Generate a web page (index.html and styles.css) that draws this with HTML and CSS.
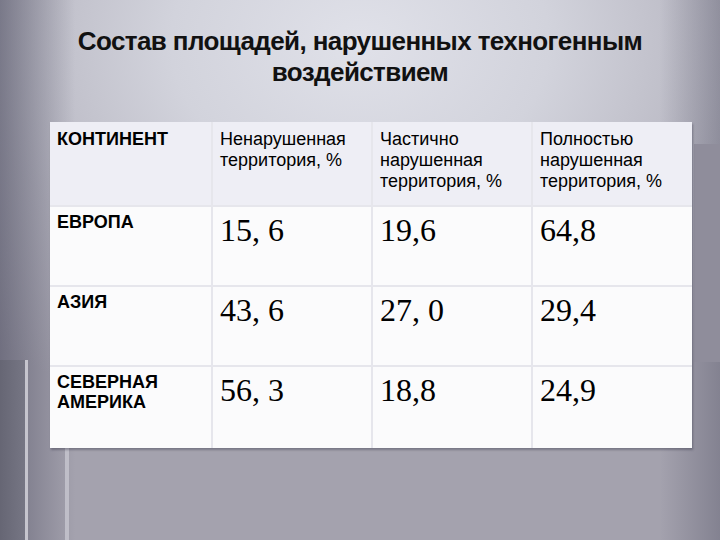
FILE: index.html
```html
<!DOCTYPE html>
<html lang="ru">
<head>
<meta charset="utf-8">
<title>Состав площадей</title>
<link rel="stylesheet" href="styles.css">
</head>
<body>
<div class="slide">
  <h1 class="title">Состав площадей, нарушенных техногенным<br>воздействием</h1>
  <table class="data">
    <colgroup>
      <col class="c1"><col class="c2"><col class="c3"><col class="c4">
    </colgroup>
    <thead>
      <tr class="head">
        <th class="label">КОНТИНЕНТ</th>
        <th>Ненарушенная территория, %</th>
        <th>Частично нарушенная территория, %</th>
        <th>Полностью нарушенная территория, %</th>
      </tr>
    </thead>
    <tbody>
      <tr class="r1">
        <td class="label">ЕВРОПА</td>
        <td class="num">15, 6</td>
        <td class="num">19,6</td>
        <td class="num">64,8</td>
      </tr>
      <tr class="r2">
        <td class="label">АЗИЯ</td>
        <td class="num">43, 6</td>
        <td class="num">27, 0</td>
        <td class="num">29,4</td>
      </tr>
      <tr class="r3">
        <td class="label">СЕВЕРНАЯ АМЕРИКА</td>
        <td class="num">56, 3</td>
        <td class="num">18,8</td>
        <td class="num">24,9</td>
      </tr>
    </tbody>
  </table>
</div>
</body>
</html>
```
FILE: styles.css
```css
html, body {
  margin: 0;
  padding: 0;
}
body {
  width: 720px;
  height: 540px;
  overflow: hidden;
  font-family: "Liberation Sans", Arial, sans-serif;
  background-color: #a5a3af;
  background-repeat: no-repeat;
  background-image:
    linear-gradient(#c6c5ce, #c6c5ce),
    linear-gradient(#bfbec8, #bfbec8),
    linear-gradient(to right, #666674, #767684),
    linear-gradient(#8f8d9b, #8f8d9b),
    linear-gradient(to right, rgba(70, 70, 90, 0.55), rgba(70, 70, 90, 0) 75px),
    linear-gradient(to left, rgba(70, 70, 90, 0.35), rgba(70, 70, 90, 0) 60px),
    radial-gradient(ellipse 75% 75% at 50% 8%, #e0e1e9 0%, #d2d3dc 35%, #b6b5c0 70%, #a4a2ae 100%);
  background-size:
    3px 180px,
    4px 92px,
    25px 180px,
    26px 218px,
    100% 100%,
    100% 100%,
    100% 100%;
  background-position:
    25px 360px,
    65px 448px,
    0 360px,
    694px 144px,
    0 0,
    0 0,
    0 0;
}
.slide {
  width: 720px;
  height: 540px;
}
.title {
  margin: 0;
  padding-top: 26px;
  font-size: 26px;
  letter-spacing: -0.6px;
  line-height: 31px;
  font-weight: bold;
  text-align: center;
  color: #111;
}
.data {
  margin: 34px 0 0 50px;
  width: 642px;
  table-layout: fixed;
  border-collapse: collapse;
  background: #fbfbfc;
  box-shadow: 1px 2px 2px rgba(40, 40, 60, 0.35);
}
.c1 { width: 162px; }
.c2, .c3, .c4 { width: 160px; }
.data th,
.data td {
  border: 2px solid #e6e6ec;
  vertical-align: top;
  text-align: left;
  padding: 5px 6px 0 7px;
  color: #000;
}
.data tr:first-child th { border-top: none; }
.data tr:last-child td { border-bottom: none; }
.data th:first-child, .data td:first-child { border-left: none; }
.data th:last-child, .data td:last-child { border-right: none; }
.head th {
  height: 84px;
  box-sizing: border-box;
  padding-top: 7px;
  background: #eeeef5;
  font-size: 18px;
  line-height: 21px;
  font-weight: normal;
}
.head th.label { font-weight: bold; }
.r1 td, .r2 td { height: 80px; box-sizing: border-box; }
.r3 td { height: 82px; box-sizing: border-box; }
.label {
  font-size: 18px;
  line-height: 20px;
  font-weight: bold;
}
.num {
  font-family: "Liberation Serif", "Times New Roman", serif;
  font-size: 32px;
  line-height: 37px;
  padding-left: 8px;
}
```
